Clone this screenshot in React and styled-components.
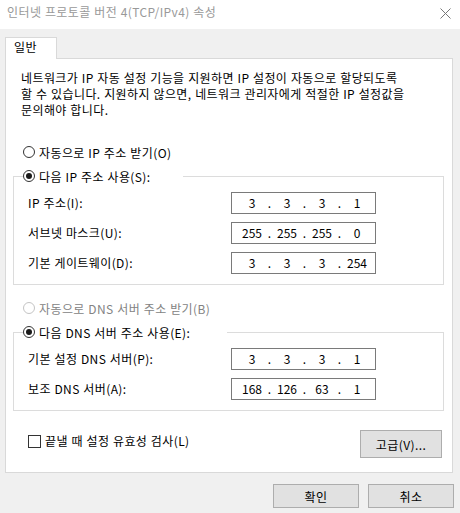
import styled, { createGlobalStyle } from "styled-components"

const GlobalStyle = createGlobalStyle`
  html, body {
    margin: 0;
    padding: 0;
    background: #f0f0f0;
  }
  body {
    font-family: "Noto Sans CJK KR", "Noto Sans", sans-serif;
    font-size: 12px;
    letter-spacing: 0.4px;
    word-spacing: 0.5px;
    color: #000;
  }
`

const Window = styled.div`
  width: 460px;
  height: 513px;
  display: flex;
  flex-direction: column;
  background: #f0f0f0;
  overflow: hidden;
`

const TitleBar = styled.div`
  height: 29px;
  flex: none;
  box-sizing: border-box;
  padding: 4px 9px 0 7px;
  display: flex;
  justify-content: space-between;
  align-items: flex-start;
  background: #fff;
`

const Title = styled.div`
  color: #999;
  line-height: 16px;
`

const CloseIcon = styled.svg`
  width: 11px;
  height: 11px;
  margin-top: 4px;
`

const Body = styled.div`
  flex: 1;
  display: flex;
  flex-direction: column;
  padding: 8px 7px 0 5px;
`

const TabRow = styled.div`
  display: flex;
  margin-bottom: -1px;
`

const Tab = styled.div`
  position: relative;
  z-index: 1;
  width: 52px;
  height: 22px;
  box-sizing: border-box;
  padding: 1px 0 0 8px;
  line-height: 16px;
  background: #fff;
  border: 1px solid #d9d9d9;
  border-bottom: none;
`

const Panel = styled.div`
  height: 415px;
  box-sizing: border-box;
  display: flex;
  flex-direction: column;
  padding: 0 8px 0 7px;
  background: #fff;
  border: 1px solid #d9d9d9;
`

const Description = styled.p`
  margin: 11px 0 0 8px;
  line-height: 16px;
  white-space: nowrap;
`

const RadioRow = styled.label`
  display: flex;
  align-items: center;
  gap: 4px;
  height: 16px;
  margin: ${(p) => p.$margin ?? "0"};
  color: ${(p) => (p.$disabled ? "#838383" : "#000")};
  white-space: nowrap;
`

const RadioCircle = styled.span`
  width: 12px;
  height: 12px;
  flex: none;
  box-sizing: border-box;
  border-radius: 50%;
  border: 1px solid ${(p) => (p.$disabled ? "#c4c4c4" : "#333")};
  background: #fff;
  display: grid;
  place-items: center;

  &::after {
    content: "";
    width: 6px;
    height: 6px;
    border-radius: 50%;
    background: ${(p) => (p.$checked ? "#1a1a1a" : "transparent")};
  }
`

const Group = styled.fieldset`
  margin: 8px 0 0;
  padding: 0 0 10px;
  min-width: 0;
  border: 1px solid #dcdcdc;
`

const Legend = styled.legend`
  margin-left: 9px;
  padding: 0;
  width: ${(p) => p.$width}px;
`

const FieldList = styled.div`
  display: flex;
  flex-direction: column;
  gap: 8px;
  padding: 8px 0 0 14px;
`

const FieldRow = styled.div`
  display: flex;
  align-items: center;
`

const FieldLabel = styled.span`
  width: 203px;
  line-height: 16px;
`

const IpBox = styled.div`
  width: 145px;
  height: 22px;
  box-sizing: border-box;
  padding-left: 6px;
  display: flex;
  align-items: center;
  background: #fff;
  border: 1px solid #7a7a7a;
  line-height: 16px;
  letter-spacing: 0;
`

const Octet = styled.span`
  width: 28px;
  text-align: center;
`

const Dot = styled.span`
  width: 7px;
  text-align: center;
`

const Footer = styled.div`
  margin-top: 19px;
  padding: 0 2px 0 15px;
  display: flex;
  justify-content: space-between;
  align-items: flex-start;
`

const CheckRow = styled.label`
  margin-top: 3px;
  display: flex;
  align-items: center;
  gap: 4px;
  line-height: 16px;
`

const CheckBox = styled.span`
  width: 13px;
  height: 13px;
  box-sizing: border-box;
  border: 1px solid #333;
  background: #fff;
`

const Button = styled.button`
  width: ${(p) => p.$width}px;
  height: ${(p) => p.$height}px;
  padding: 0;
  font: inherit;
  letter-spacing: inherit;
  color: #000;
  background: #e1e1e1;
  border: 1px solid #adadad;
`

const ButtonBar = styled.div`
  margin: 11px -1px 0 0;
  display: flex;
  justify-content: flex-end;
  gap: 9px;
`

function Radio({ checked, disabled, label, margin }) {
  return (
    <RadioRow $margin={margin} $disabled={disabled}>
      <RadioCircle $checked={checked} $disabled={disabled} />
      {label}
    </RadioRow>
  )
}

function IpField({ value }) {
  const parts = value.split(".")
  return (
    <IpBox>
      {parts.map((part, i) => (
        <span key={i} style={{ display: "contents" }}>
          <Octet>{part}</Octet>
          {i < parts.length - 1 && <Dot>.</Dot>}
        </span>
      ))}
    </IpBox>
  )
}

const ipFields = [
  ["IP 주소(I):", "3.3.3.1"],
  ["서브넷 마스크(U):", "255.255.255.0"],
  ["기본 게이트웨이(D):", "3.3.3.254"],
]

const dnsFields = [
  ["기본 설정 DNS 서버(P):", "3.3.3.1"],
  ["보조 DNS 서버(A):", "168.126.63.1"],
]

export default function App() {
  return (
    <Window>
      <GlobalStyle />
      <TitleBar>
        <Title>인터넷 프로토콜 버전 4(TCP/IPv4) 속성</Title>
        <CloseIcon viewBox="0 0 11 11">
          <path d="M0.5 0.5 L10.5 10.5 M10.5 0.5 L0.5 10.5" stroke="#777" strokeWidth="1" fill="none" />
        </CloseIcon>
      </TitleBar>
      <Body>
        <TabRow>
          <Tab>일반</Tab>
        </TabRow>
        <Panel>
          <Description>
            네트워크가 IP 자동 설정 기능을 지원하면 IP 설정이 자동으로 할당되도록
            <br />
            할 수 있습니다. 지원하지 않으면, 네트워크 관리자에게 적절한 IP 설정값을
            <br />
            문의해야 합니다.
          </Description>
          <Radio label="자동으로 IP 주소 받기(O)" margin="26px 0 0 10px" />
          <Group>
            <Legend $width={160}>
              <Radio checked label="다음 IP 주소 사용(S):" />
            </Legend>
            <FieldList>
              {ipFields.map(([label, value]) => (
                <FieldRow key={label}>
                  <FieldLabel>{label}</FieldLabel>
                  <IpField value={value} />
                </FieldRow>
              ))}
            </FieldList>
          </Group>
          <Radio disabled label="자동으로 DNS 서버 주소 받기(B)" margin="15px 0 0 10px" />
          <Group>
            <Legend $width={204}>
              <Radio checked label="다음 DNS 서버 주소 사용(E):" />
            </Legend>
            <FieldList>
              {dnsFields.map(([label, value]) => (
                <FieldRow key={label}>
                  <FieldLabel>{label}</FieldLabel>
                  <IpField value={value} />
                </FieldRow>
              ))}
            </FieldList>
          </Group>
          <Footer>
            <CheckRow>
              <CheckBox />
              끝낼 때 설정 유효성 검사(L)
            </CheckRow>
            <Button $width={82} $height={28}>고급(V)...</Button>
          </Footer>
        </Panel>
        <ButtonBar>
          <Button $width={86} $height={24}>확인</Button>
          <Button $width={86} $height={24}>취소</Button>
        </ButtonBar>
      </Body>
    </Window>
  )
}
